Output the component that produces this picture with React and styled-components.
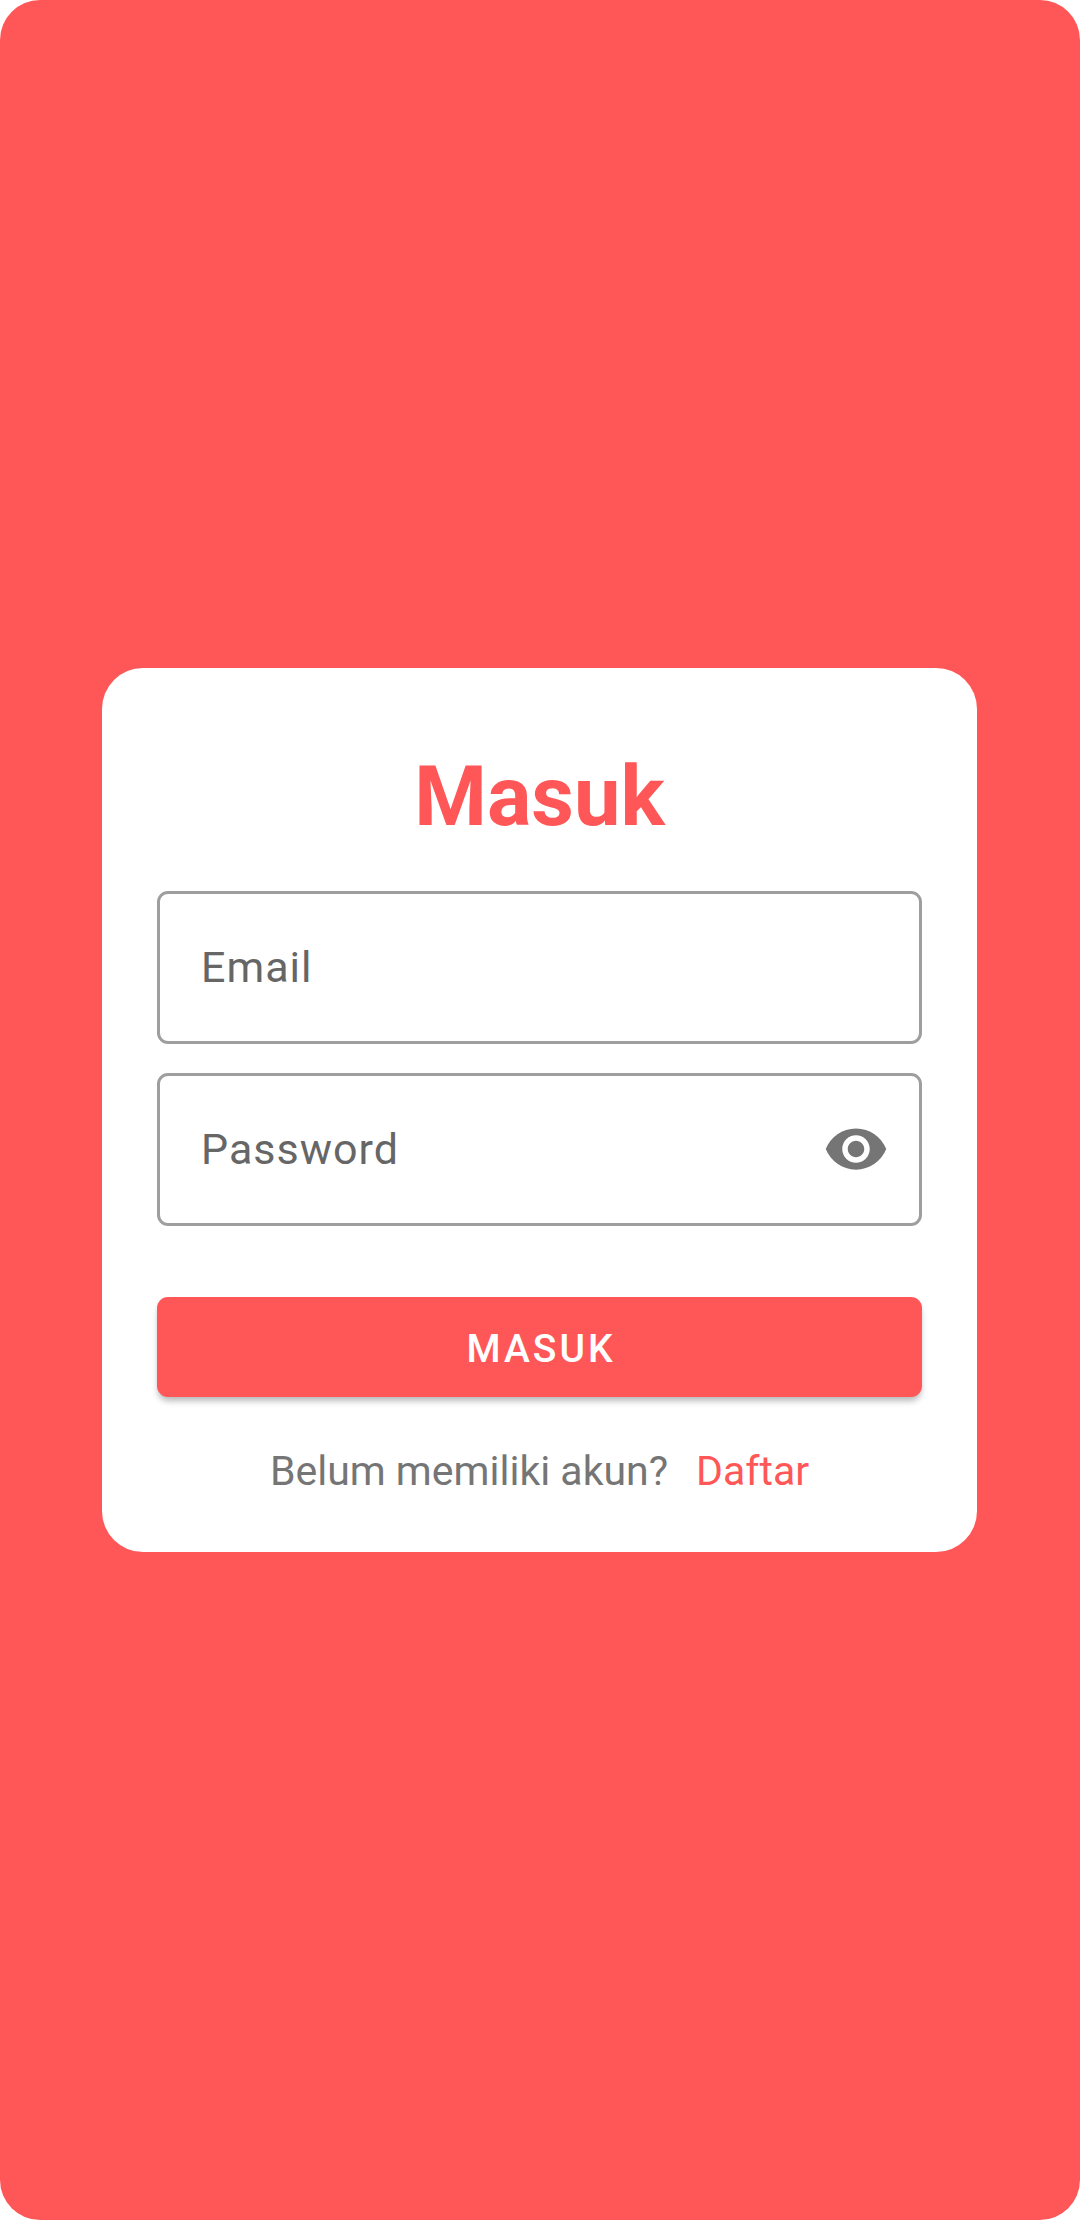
import React, { useState } from "react";
import styled, { createGlobalStyle } from "styled-components";

const coral = "#ff5757";

const GlobalStyle = createGlobalStyle`
  *, *::before, *::after { box-sizing: border-box; }
  body {
    margin: 0;
    background: #fff;
    font-family: Roboto, "Liberation Sans", sans-serif;
  }
`;

const Screen = styled.main`
  display: flex;
  align-items: center;
  justify-content: center;
  min-height: 100vh;
  padding: 48px 103px 48px 102px;
  border-radius: 40px;
  background: ${coral};
`;

const Card = styled.form`
  display: flex;
  flex-direction: column;
  flex: 1;
  max-width: 960px;
  padding: 81px 55px 57px;
  border-radius: 41px;
  background: #fff;
`;

const Title = styled.h1`
  margin: 0 0 46px;
  color: ${coral};
  font-size: 83px;
  font-weight: 700;
  line-height: 96px;
  text-align: center;
`;

const Fields = styled.div`
  display: flex;
  flex-direction: column;
  gap: 29px;
`;

const FieldBox = styled.div`
  display: grid;
  grid-template-columns: 1fr auto;
  align-items: center;
  height: 153px;
  border: 3px solid #9e9e9e;
  border-radius: 11px;

  &:focus-within { border-color: ${coral}; }
`;

const FieldLabel = styled.label`
  grid-area: 1 / 1;
  padding-left: 41px;
  color: #666;
  font-size: 43px;
  line-height: 51px;
  letter-spacing: 1px;
  pointer-events: none;
`;

const FieldInput = styled.input`
  grid-area: 1 / 1;
  width: 100%;
  height: 100%;
  padding: 0 41px;
  border: 0;
  outline: 0;
  background: transparent;
  color: #212121;
  font-family: inherit;
  font-size: 43px;

  &:not(:placeholder-shown) + ${FieldLabel} { visibility: hidden; }
`;

const IconButton = styled.button`
  display: flex;
  margin-right: 30px;
  padding: 0 0 1px;
  border: 0;
  background: none;
  color: #757575;
  cursor: pointer;
`;

const SubmitButton = styled.button`
  height: 100px;
  margin-top: 71px;
  padding: 4px 0 0 3px;
  border: 0;
  border-radius: 11px;
  background: ${coral};
  box-shadow: 0 5px 6px -1px rgba(0, 0, 0, 0.28);
  color: #fff;
  font-family: inherit;
  font-size: 39px;
  font-weight: 500;
  letter-spacing: 3px;
  text-transform: uppercase;
  cursor: pointer;
`;

const Footer = styled.p`
  display: flex;
  justify-content: center;
  gap: 28px;
  margin: 50px 0 0;
  color: #757575;
  font-size: 41px;
  line-height: 48px;
`;

const RegisterLink = styled.a`
  color: ${coral};
  text-decoration: none;
`;

function EyeIcon() {
  return (
    <svg width="66" height="66" viewBox="0 0 24 24" fill="currentColor" aria-hidden="true">
      <path d="M12 4.5C7 4.5 2.73 7.61 1 12c1.73 4.39 6 7.5 11 7.5s9.27-3.11 11-7.5c-1.73-4.39-6-7.5-11-7.5zM12 17c-2.76 0-5-2.24-5-5s2.24-5 5-5 5 2.24 5 5-2.24 5-5 5zm0-8c-1.66 0-3 1.34-3 3s1.34 3 3 3 3-1.34 3-3-1.34-3-3-3z" />
    </svg>
  );
}

function TextField({ id, label, type, children }) {
  return (
    <FieldBox>
      <FieldInput id={id} name={id} type={type} placeholder=" " />
      <FieldLabel htmlFor={id}>{label}</FieldLabel>
      {children}
    </FieldBox>
  );
}

export default function App() {
  const [visible, setVisible] = useState(false);

  return (
    <>
      <GlobalStyle />
      <Screen>
        <Card onSubmit={(event) => event.preventDefault()}>
          <Title>Masuk</Title>
          <Fields>
            <TextField id="email" label="Email" type="email" />
            <TextField id="password" label="Password" type={visible ? "text" : "password"}>
              <IconButton
                type="button"
                aria-label="Tampilkan password"
                aria-pressed={visible}
                onClick={() => setVisible(!visible)}
              >
                <EyeIcon />
              </IconButton>
            </TextField>
          </Fields>
          <SubmitButton type="submit">Masuk</SubmitButton>
          <Footer>
            <span>Belum memiliki akun?</span>
            <RegisterLink href="#daftar">Daftar</RegisterLink>
          </Footer>
        </Card>
      </Screen>
    </>
  );
}
